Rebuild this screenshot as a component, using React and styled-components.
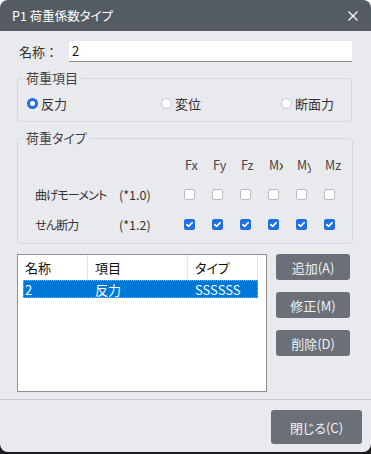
import React from "react";
import styled, { createGlobalStyle } from "styled-components";

const GlobalStyle = createGlobalStyle`
  html, body {
    margin: 0;
    padding: 0;
  }
  body {
    width: 371px;
    height: 454px;
    overflow: hidden;
    background: linear-gradient(#ffffff 0 50%, #1b1b1b 50% 100%);
    font-family: "Noto Sans CJK JP", "Noto Sans", sans-serif;
    font-feature-settings: "palt";
    color: #333;
  }
`;

/**
 * Style-Components
 */

const Dialog = styled.div`
  display: flex;
  flex-direction: column;
  width: 371px;
  height: 452px;
  border-radius: 8px;
  overflow: hidden;
  background: #e9eaee;
`;

const TitleBar = styled.div`
  display: flex;
  align-items: center;
  justify-content: space-between;
  height: 31px;
  padding: 0 12px;
  background: #555b63;
  color: #fff;
  font-size: 12.5px;
  flex-shrink: 0;
`;

const CloseIcon = styled.svg`
  width: 10px;
  height: 10px;
  margin-right: 1px;
`;

const Content = styled.div`
  padding: 0 19px 0 17px;
`;

const NameRow = styled.div`
  display: flex;
  align-items: center;
  margin-top: 10px;
  height: 21px;
`;

const Label = styled.span`
  width: 50px;
  padding-left: 2px;
  font-size: 13px;
  font-feature-settings: normal;
`;

const TextInput = styled.div`
  flex: 1;
  height: 20px;
  line-height: 20px;
  background: #fff;
  border-bottom: 1px solid #8d8d8d;
  padding: 0 3px;
  font-size: 13px;
  color: #111;
`;

const Group = styled.fieldset`
  margin: 7px 0 0;
  padding: 0;
  border: 1px solid #d6d7db;
  border-radius: 4px;
`;

const Legend = styled.legend`
  margin-left: 5px;
  padding: 0 3px;
  font-size: 13px;
  line-height: 18px;
  color: #444;
`;

const RadioRow = styled.div`
  display: grid;
  grid-template-columns: 134px 120px auto;
  align-items: center;
  height: 20px;
  padding: 6px 0 8px 9px;
`;

const RadioItem = styled.label`
  display: flex;
  align-items: center;
  gap: 3px;
  font-size: 13px;
`;

const RadioDot = styled.span`
  box-sizing: border-box;
  width: 11px;
  height: 11px;
  border-radius: 50%;
  background: #fff;
  border: ${(props) => (props.checked ? "3px solid #1f6fe0" : "1px solid #c4c5c9")};
`;

const TypeGrid = styled.div`
  display: grid;
  grid-template-columns: 84px 65px repeat(6, 28px);
  grid-auto-rows: 20px;
  row-gap: 10px;
  align-items: center;
  padding: 7px 0 9px 17px;
  font-size: 12.5px;
`;

const RowName = styled.span`
  font-size: 12px;
  letter-spacing: -0.8px;
  white-space: nowrap;
`;

const AxisHead = styled.span`
  display: block;
  max-width: ${(props) => props.clip}px;
  overflow: hidden;
  white-space: nowrap;
  color: #444;
  padding-left: 1px;
`;

const Box = styled.span`
  box-sizing: border-box;
  display: flex;
  align-items: center;
  justify-content: center;
  width: 11px;
  height: 11px;
  border-radius: 2px;
  background: ${(props) => (props.checked ? "#1f6fe0" : "#fff")};
  border: 1px solid ${(props) => (props.checked ? "#1f6fe0" : "#b9bbbf")};
`;

const Lower = styled.div`
  display: flex;
  gap: 9px;
  margin-top: 10px;
`;

const List = styled.div`
  width: 250px;
  height: 138px;
  box-sizing: border-box;
  background: #fff;
  border: 1px solid #8f8f8f;
  padding-left: 5px;
  font-size: 13px;
  color: #111;
`;

const ListRow = styled.div`
  display: grid;
  grid-template-columns: 65px 100px 70px;
  width: 235px;
  height: ${(props) => (props.head ? 25 : 18)}px;
  align-items: center;
  background: ${(props) => (props.selected ? "#0078d7" : "transparent")};
  color: ${(props) => (props.selected ? "#fff" : "#111")};
  outline: ${(props) => (props.selected ? "1px dotted #f3a33c" : "none")};
  outline-offset: -1px;
`;

const Cell = styled.div`
  height: 100%;
  display: flex;
  align-items: center;
  padding-left: ${(props) => (props.first ? 2 : 7)}px;
  border-right: ${(props) => (props.head ? "1px solid #e4e4e4" : "none")};
  white-space: nowrap;
`;

const ButtonCol = styled.div`
  display: flex;
  flex-direction: column;
  gap: 12px;
`;

const Button = styled.button`
  width: ${(props) => props.w || 74}px;
  height: ${(props) => props.h || 26}px;
  border: none;
  border-radius: 3px;
  background: #6b7078;
  color: #f2f2f2;
  font-family: inherit;
  font-feature-settings: "palt";
  font-size: 13px;
  padding: 0;
`;

const Footer = styled.div`
  display: flex;
  justify-content: flex-end;
  margin-top: auto;
  border-top: 1px solid #c6c8cc;
  padding: 10px 9px 8px;
`;

const axes = [
  { name: "Fx", clip: 16 },
  { name: "Fy", clip: 16 },
  { name: "Fz", clip: 16 },
  { name: "Mx", clip: 14 },
  { name: "My", clip: 14 },
  { name: "Mz", clip: 17 },
];

const rows = [
  { name: "曲げモーメント", factor: "(*1.0)", checked: false },
  { name: "せん断力", factor: "(*1.2)", checked: true },
];

function Check({ checked }) {
  return (
    <Box checked={checked}>
      {checked && (
        <svg width="9" height="9" viewBox="0 0 9 9">
          <polyline
            points="1.8,4.6 3.6,6.4 7.2,2.6"
            fill="none"
            stroke="#fff"
            strokeWidth="1.6"
            strokeLinecap="round"
            strokeLinejoin="round"
          />
        </svg>
      )}
    </Box>
  );
}

export default function App() {
  return (
    <>
      <GlobalStyle />
      <Dialog>
        <TitleBar>
          <span>P1 荷重係数タイプ</span>
          <CloseIcon viewBox="0 0 10 10">
            <path d="M0.5 0.5 L9.5 9.5 M9.5 0.5 L0.5 9.5" stroke="#fff" strokeWidth="1.2" />
          </CloseIcon>
        </TitleBar>

        <Content>
          <NameRow>
            <Label>名称：</Label>
            <TextInput>2</TextInput>
          </NameRow>

          <Group>
            <Legend>荷重項目</Legend>
            <RadioRow>
              <RadioItem><RadioDot checked />反力</RadioItem>
              <RadioItem><RadioDot />変位</RadioItem>
              <RadioItem><RadioDot />断面力</RadioItem>
            </RadioRow>
          </Group>

          <Group>
            <Legend>荷重タイプ</Legend>
            <TypeGrid>
              <span />
              <span />
              {axes.map((a) => (
                <AxisHead key={a.name} clip={a.clip}>{a.name}</AxisHead>
              ))}
              {rows.map((r) => (
                <React.Fragment key={r.name}>
                  <RowName>{r.name}</RowName>
                  <span>{r.factor}</span>
                  {axes.map((a) => (
                    <Check key={a.name} checked={r.checked} />
                  ))}
                </React.Fragment>
              ))}
            </TypeGrid>
          </Group>

          <Lower>
            <List>
              <ListRow head>
                <Cell head first>名称</Cell>
                <Cell head>項目</Cell>
                <Cell head>タイプ</Cell>
              </ListRow>
              <ListRow selected>
                <Cell first>2</Cell>
                <Cell>反力</Cell>
                <Cell>SSSSSS</Cell>
              </ListRow>
            </List>
            <ButtonCol>
              <Button>追加(A)</Button>
              <Button>修正(M)</Button>
              <Button>削除(D)</Button>
            </ButtonCol>
          </Lower>
        </Content>

        <Footer>
          <Button w={91} h={34}>閉じる(C)</Button>
        </Footer>
      </Dialog>
    </>
  );
}
